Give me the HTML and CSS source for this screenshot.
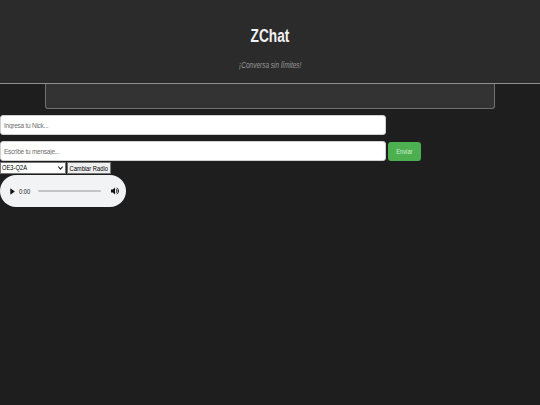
FILE: index.html
```html
<!DOCTYPE html>
<html lang="es">
<head>
<meta charset="utf-8">
<title>ZChat</title>
<link rel="stylesheet" href="styles.css">
</head>
<body>
<header class="header">
  <h1 class="title"><span class="narrow">ZChat</span></h1>
  <p class="subtitle"><span class="narrow">¡Conversa sin límites!</span></p>
</header>
<main class="main">
  <div class="chatbox"></div>
  <input class="field nick" type="text" placeholder="Ingresa tu Nick...">
  <div class="row">
    <input class="field msg" type="text" placeholder="Escribe tu mensaje...">
    <button class="send"><span class="narrow">Enviar</span></button>
  </div>
  <div class="radio-row">
    <div class="select"><span class="narrow left">OE3-Q2A</span><svg class="caret" width="5" height="4" viewBox="0 0 5 4"><path d="M0.3 0.6 L2.5 3.2 L4.7 0.6" stroke="#222" stroke-width="1.1" fill="none"/></svg></div>
    <button class="change"><span class="narrow">Cambiar Radio</span></button>
  </div>
  <div class="player">
    <svg class="play" width="5" height="7" viewBox="0 0 5 7"><path d="M0.3 0.3 L4.8 3.5 L0.3 6.7 Z" fill="#111"/></svg>
    <span class="time"><span class="narrow left">0:00</span></span>
    <span class="track"></span>
    <svg class="vol" width="8" height="8" viewBox="0 0 8 8"><path d="M0 2.6 H1.8 L4 0.6 V7.4 L1.8 5.4 H0 Z" fill="#111"/><path d="M5 2.2 A2.2 2.2 0 0 1 5 5.8" stroke="#111" stroke-width="1" fill="none"/><path d="M5.6 0.9 A3.4 3.4 0 0 1 5.6 7.1" stroke="#111" stroke-width="0.9" fill="none"/></svg>
  </div>
</main>
</body>
</html>
```
FILE: styles.css
```css
* { box-sizing: border-box; }
html, body { margin: 0; padding: 0; }
body {
  background: #1e1e1e;
  font-family: "Liberation Sans", Arial, sans-serif;
  width: 540px;
  height: 405px;
  overflow: hidden;
}
.narrow {
  display: inline-block;
  transform: scaleX(0.72);
  transform-origin: center;
  white-space: nowrap;
}
.narrow.left { transform-origin: left center; }
.header {
  background: #2b2b2b;
  height: 84px;
  border-bottom: 1px solid #8f8f8f;
  text-align: center;
  padding-top: 25px;
}
.title {
  margin: 0;
  color: #f2f2f2;
  font-size: 19px;
  line-height: 22px;
  font-weight: bold;
}
.subtitle {
  margin: 13px 0 0;
  color: #9a9a9a;
  font-style: italic;
  font-size: 9px;
  line-height: 11px;
}
.main {
  display: flex;
  flex-direction: column;
  align-items: flex-start;
}
.chatbox {
  margin: 0 0 0 45px;
  width: 450px;
  height: 25px;
  background: #333333;
  border: 1px solid #707070;
  border-top: none;
  border-radius: 0 0 3px 3px;
}
.field {
  width: 386px;
  height: 20px;
  border: 1px solid #cfcfcf;
  border-radius: 3px;
  background: #fff;
  font-family: inherit;
  font-size: 6.5px;
  letter-spacing: -0.25px;
  padding: 0 3px;
  outline: none;
}
.field::placeholder { color: #6f6f6f; }
.nick { margin-top: 6px; }
.row {
  display: flex;
  align-items: center;
  gap: 2px;
  margin-top: 6px;
}
.send {
  width: 33px;
  height: 19px;
  background: #4caf50;
  color: #d8ecd6;
  border: none;
  border-radius: 3px;
  font-family: inherit;
  font-size: 8px;
  padding: 0;
  display: flex;
  align-items: center;
  justify-content: center;
}
.radio-row {
  display: flex;
  gap: 1px;
  margin-top: 1px;
  height: 12px;
}
.select {
  width: 66px;
  height: 12px;
  background: #fff;
  border: 1px solid #767676;
  font-size: 8px;
  line-height: 10px;
  padding-left: 1px;
  position: relative;
  color: #000;
}
.caret {
  position: absolute;
  right: 2px;
  top: 3px;
}
.change {
  width: 44px;
  height: 12px;
  background: #efefef;
  border: 1px solid #767676;
  font-family: inherit;
  font-size: 8px;
  font-weight: normal;
  padding: 0;
  color: #000;
  display: flex;
  align-items: center;
  justify-content: center;
  overflow: visible;
}
.player {
  margin-top: 1px;
  width: 126px;
  height: 32px;
  background: #f1f3f4;
  border-radius: 16px;
  display: flex;
  align-items: center;
  padding: 0 7px 0 10px;
}
.play { flex: none; }
.time {
  font-size: 8px;
  color: #222;
  margin-left: 4px;
  width: 13px;
}
.track {
  flex: 1;
  height: 2px;
  background: #c4c4c4;
  margin: 0 10px 0 6px;
  border-radius: 1px;
}
.vol { flex: none; }
```
